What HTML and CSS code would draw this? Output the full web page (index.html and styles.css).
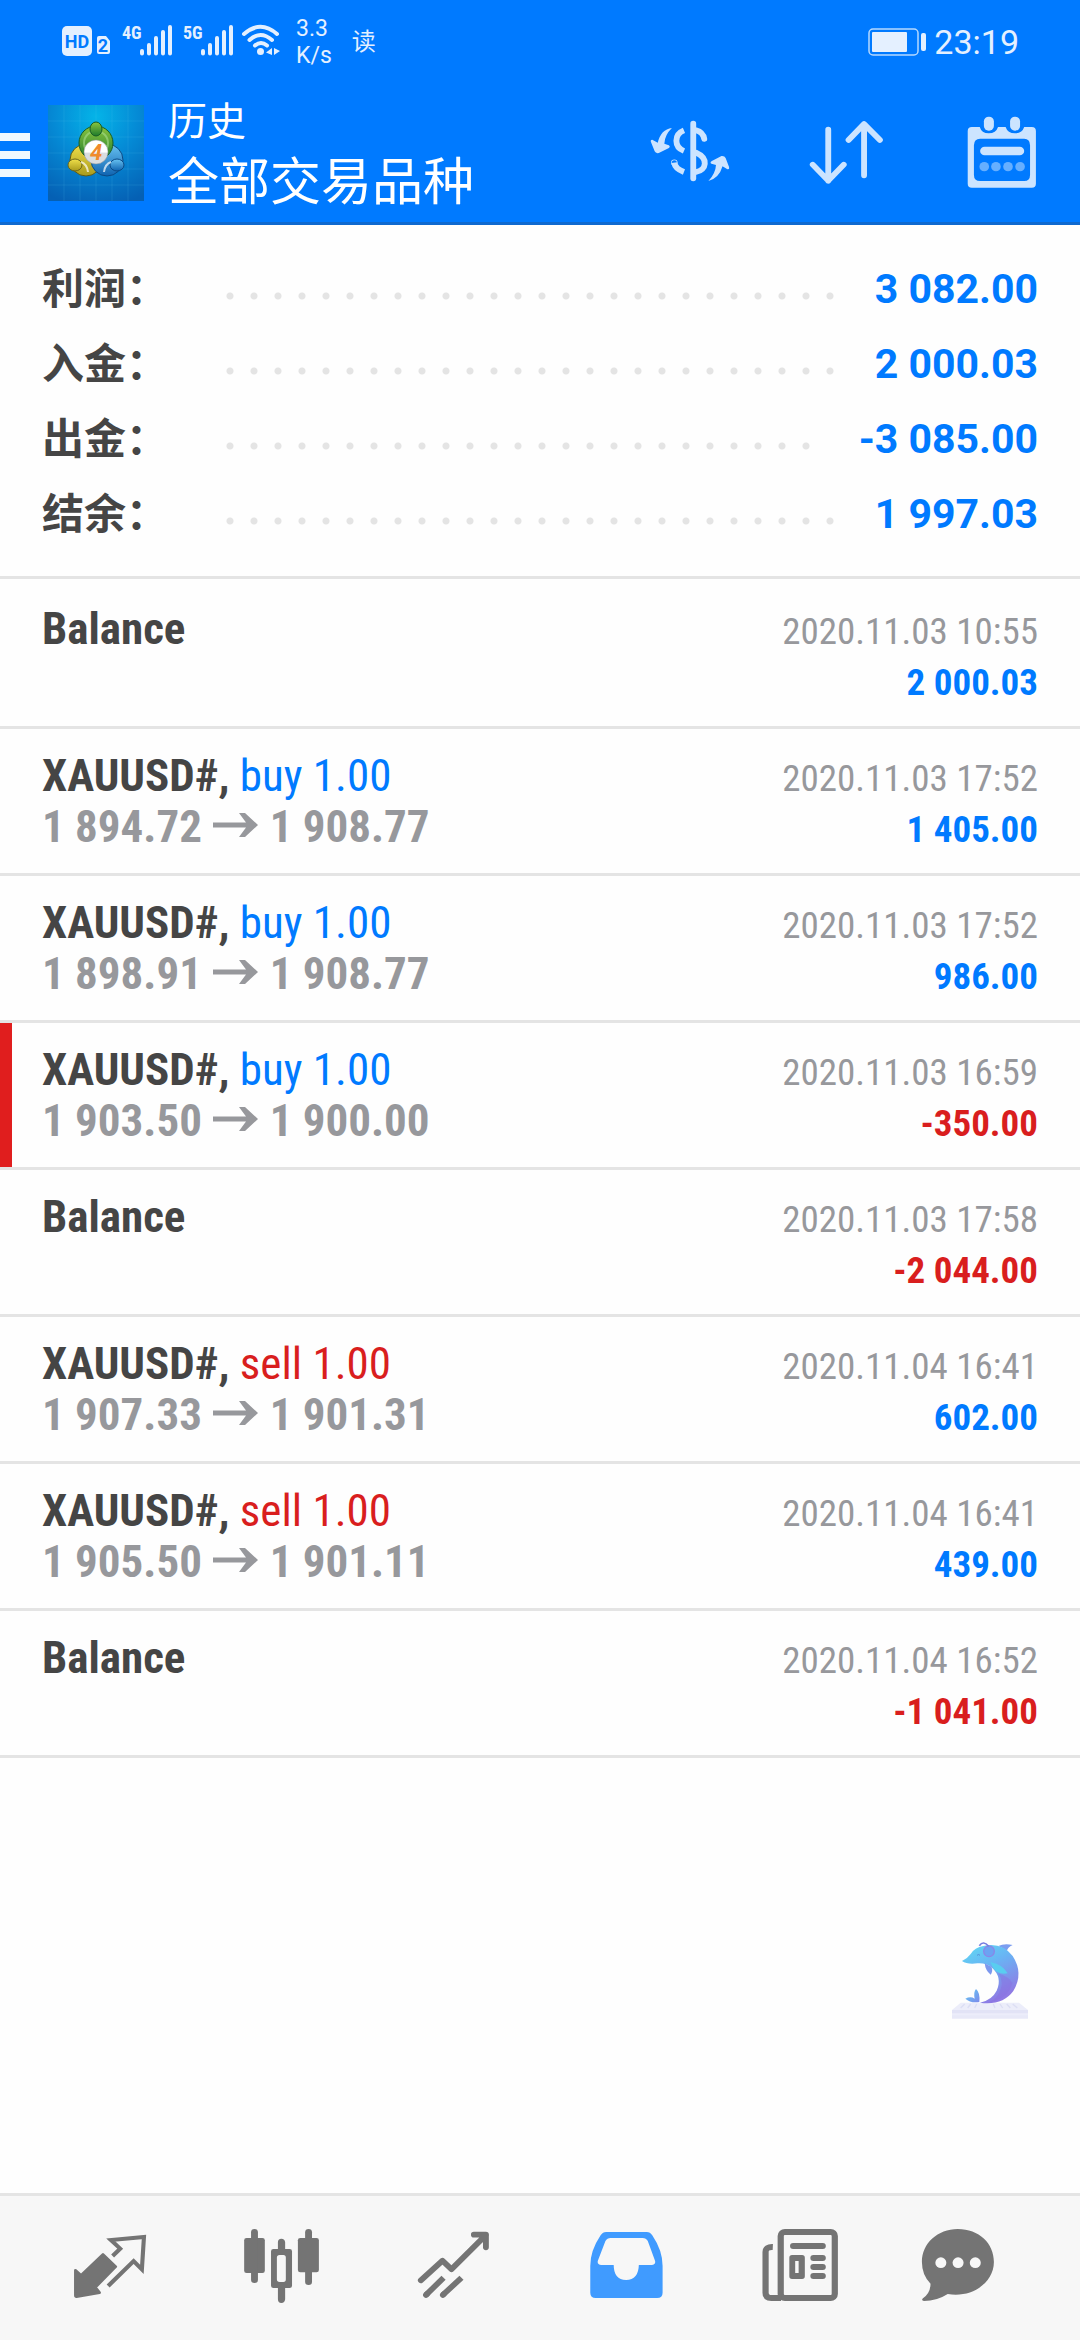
FILE: index.html
```html
<!DOCTYPE html>
<html lang="zh-CN">
<head>
<meta charset="utf-8">
<meta name="viewport" content="width=device-width, initial-scale=1">
<title>历史</title>
<link rel="stylesheet" href="styles.css">
</head>
<body>
<div class="app">
  <header class="header">
    <div class="status">
      <svg class="status-icons" viewBox="60 20 222 44" aria-hidden="true">
        <rect x="62" y="26" width="30" height="30" rx="5" fill="#e4f0ff"/>
        <text x="77" y="48" class="svg-hd">HD</text>
        <path d="M99 36h7l4 5v11q0 2-2 2h-9q-2 0-2-2V38q0-2 2-2z" fill="#e4f0ff"/>
        <text x="103" y="52" class="svg-sim">2</text>
        <text x="122" y="39" class="svg-net">4G</text>
        <path d="M142 51v2.500M149 45v8.500M156 38v15.500M163 32v21.500M170 27v26.500" class="bars"/>
        <text x="183" y="39" class="svg-net">5G</text>
        <path d="M203 51v2.500M210 45v8.500M217 38v15.500M224 32v21.500M231 27v26.500" class="bars"/>
        <path d="M244 34q16.500-14.500 33 0M249.500 40q11-10 22.500 0M255 45.500q6-5 12 0" class="wifi"/>
        <circle cx="260.500" cy="51.500" r="3.500" fill="#e4f0ff"/>
        <path d="M272 48v7l-6-2.500zM274 48l6 3-6 4z" fill="#e4f0ff"/>
      </svg>
      <div class="speed"><span>3.3</span><span>K/s</span></div>
      <span class="reader">读</span>
      <svg class="battery" viewBox="0 0 58 28" aria-hidden="true">
        <rect x="1" y="1" width="49" height="26" rx="4" fill="none" stroke="#b5d9ff" stroke-width="1.500"/>
        <rect x="4" y="4" width="35" height="20" rx="1" fill="#e4f0ff"/>
        <rect x="53" y="5" width="5" height="18" rx="2" fill="#e4f0ff"/>
      </svg>
      <time class="clock">23:19</time>
    </div>
    <div class="toolbar">
      <button class="menu" type="button" aria-label="菜单"><i></i><i></i><i></i></button>
      <svg class="logo" viewBox="0 0 96 96" aria-hidden="true">
        <defs>
          <radialGradient id="sky" cx=".5" cy=".12" r=".95"><stop offset="0" stop-color="#04b4e8"/><stop offset=".45" stop-color="#058bd6"/><stop offset="1" stop-color="#0560b4"/></radialGradient>
          <linearGradient id="grn" x2="0" y2="1"><stop offset="0" stop-color="#8cc63f"/><stop offset="1" stop-color="#1d7a2c"/></linearGradient>
          <linearGradient id="yel" x2="0" y2="1"><stop offset="0" stop-color="#f0e04a"/><stop offset="1" stop-color="#a99a1c"/></linearGradient>
          <linearGradient id="blu" x2="0" y2="1"><stop offset="0" stop-color="#69c3f2"/><stop offset="1" stop-color="#0f63b0"/></linearGradient>
          <linearGradient id="ball" x2="0" y2="1"><stop offset=".5" stop-color="#fff"/><stop offset=".55" stop-color="#dadde0"/></linearGradient>
        </defs>
        <rect width="96" height="96" fill="url(#sky)"/>
        <path d="M16 0v96M32 0v96M48 0v96M64 0v96M80 0v96M0 16h96M0 32h96M0 48h96M0 64h96M0 80h96" stroke="#5fd0f5" stroke-opacity=".15"/>
        <circle cx="38" cy="55" r="16" fill="url(#yel)" stroke="#5d5a16"/>
        <circle cx="59" cy="55" r="16" fill="url(#blu)" stroke="#0b4a86"/>
        <circle cx="48" cy="38" r="17" fill="url(#grn)" stroke="#175c24"/>
        <circle cx="48" cy="38" r="12" fill="none" stroke="#a8dc8c" stroke-opacity=".6" stroke-width="2"/>
        <ellipse cx="48" cy="24" rx="6" ry="7" fill="url(#grn)" stroke="#175c24"/>
        <ellipse cx="27" cy="60" rx="7" ry="6" fill="url(#yel)" stroke="#6b651a"/>
        <ellipse cx="69" cy="60" rx="7" ry="6" fill="url(#blu)" stroke="#0b4a86"/>
        <path d="M33 57q6 2 7 10M63 57q-6 2-7 10" stroke="#fff" stroke-opacity=".7" stroke-width="2" fill="none"/>
        <circle cx="48" cy="47" r="12" fill="url(#ball)" stroke="#8a9096" stroke-width=".5"/>
        <text x="48" y="55" class="svg-four">4</text>
      </svg>
      <div class="titles">
        <p class="title">历史</p>
        <h1 class="subtitle">全部交易品种</h1>
      </div>
      <div class="actions">
        <button type="button" aria-label="交易品种">
          <svg viewBox="0 0 84 74"><g transform="translate(-108 -116) scale(.34438 .33333)">
            <g fill="none" stroke="#cce4ff" stroke-linecap="round" stroke-linejoin="round" stroke-width="17">
              <path d="M445 371V535"/>
              <path d="M453 391Q474 397 477 417M453 458C490 475 484 510 453 516" />
              <path d="M418 391Q396 400 396 422T418 453M390 488Q392 506 418 516" stroke-linecap="butt"/>
              <circle cx="390" cy="488" r="1"/>
            </g>
            <path d="M383 384Q351 388 342 428L326 419Q319 419 323 428L333 454Q336 461 345 459L373 445Q380 440 374 436L361 431Q362 405 383 384zM489 543Q520 535 530 499L543 507Q551 510 549 501L539 474Q536 467 527 468L499 483Q492 488 498 491L511 495Q510 520 489 543z" fill="#cce4ff"/>
            <path d="M422 375h10v160h-10z" fill="#007aff"/>
          </g></svg>
        </button>
        <button type="button" aria-label="排序">
          <svg viewBox="0 0 84 74"><g transform="translate(-262 -116) scale(.34438 .33333)" fill="none" stroke="#cce4ff" stroke-width="17" stroke-linecap="round" stroke-linejoin="round">
            <path d="M837 389V542M792 494L837 542L882 494M941 526V372M896 420L941 372L987 420"/>
          </g></svg>
        </button>
        <button type="button" aria-label="日期">
          <svg viewBox="0 0 84 74"><g transform="translate(-416 -116) scale(.34438 .33333)">
            <path fill="#cce4ff" fill-rule="evenodd" d="M1254 381H1277Q1282 400 1303 400T1330 381H1352Q1358 400 1379 400T1406 381H1428Q1440 381 1440 393V551Q1440 563 1428 563H1254Q1242 563 1242 551V393Q1242 381 1254 381zM1278 416Q1260 416 1260 436V524Q1260 543 1278 543H1406Q1423 543 1423 524V436Q1423 416 1406 416z"/>
            <rect x="1285" y="346" width="37" height="50" rx="18" fill="#007aff"/>
            <rect x="1361" y="346" width="37" height="50" rx="18" fill="#007aff"/>
            <rect x="1289" y="350" width="29" height="42" rx="14" fill="#cce4ff"/>
            <rect x="1365" y="350" width="29" height="42" rx="14" fill="#cce4ff"/>
            <rect x="1278" y="440" width="128" height="26" rx="13" fill="#cce4ff"/>
            <g fill="#66afff"><circle cx="1290" cy="500" r="14"/><circle cx="1324" cy="500" r="14"/><circle cx="1359" cy="500" r="14"/><circle cx="1394" cy="500" r="14"/></g>
          </g></svg>
        </button>
      </div>
    </div>
  </header>

  <main class="main">
    <dl class="summary">
      <div class="sum-row"><dt>利润：</dt><dd>3 082.00</dd></div>
      <div class="sum-row"><dt>入金：</dt><dd>2 000.03</dd></div>
      <div class="sum-row"><dt>出金：</dt><dd>-3 085.00</dd></div>
      <div class="sum-row"><dt>结余：</dt><dd>1 997.03</dd></div>
    </dl>
    <svg class="defs" aria-hidden="true"><symbol id="arrow" viewBox="0 0 45 24"><path d="M0 9.500H33L26 0H32L45 12L32 24H26L33 14.500H0z" fill="currentColor"/></symbol></svg>
    <ul class="deals">
      <li class="deal">
        <div class="line"><b>Balance</b><time class="date">2020.11.03 10:55</time></div>
        <div class="line"><b class="amount">2 000.03</b></div>
      </li>
      <li class="deal">
        <div class="line"><span><b>XAUUSD#,</b> <span class="buy">buy 1.00</span></span><time class="date">2020.11.03 17:52</time></div>
        <div class="line"><b class="price">1 894.72 <svg class="arrow" role="img" aria-label="→"><use href="#arrow"/></svg> 1 908.77</b><b class="amount">1 405.00</b></div>
      </li>
      <li class="deal">
        <div class="line"><span><b>XAUUSD#,</b> <span class="buy">buy 1.00</span></span><time class="date">2020.11.03 17:52</time></div>
        <div class="line"><b class="price">1 898.91 <svg class="arrow" role="img" aria-label="→"><use href="#arrow"/></svg> 1 908.77</b><b class="amount">986.00</b></div>
      </li>
      <li class="deal stopped">
        <div class="line"><span><b>XAUUSD#,</b> <span class="buy">buy 1.00</span></span><time class="date">2020.11.03 16:59</time></div>
        <div class="line"><b class="price">1 903.50 <svg class="arrow" role="img" aria-label="→"><use href="#arrow"/></svg> 1 900.00</b><b class="amount loss">-350.00</b></div>
      </li>
      <li class="deal">
        <div class="line"><b>Balance</b><time class="date">2020.11.03 17:58</time></div>
        <div class="line"><b class="amount loss">-2 044.00</b></div>
      </li>
      <li class="deal">
        <div class="line"><span><b>XAUUSD#,</b> <span class="sell">sell 1.00</span></span><time class="date">2020.11.04 16:41</time></div>
        <div class="line"><b class="price">1 907.33 <svg class="arrow" role="img" aria-label="→"><use href="#arrow"/></svg> 1 901.31</b><b class="amount">602.00</b></div>
      </li>
      <li class="deal">
        <div class="line"><span><b>XAUUSD#,</b> <span class="sell">sell 1.00</span></span><time class="date">2020.11.04 16:41</time></div>
        <div class="line"><b class="price">1 905.50 <svg class="arrow" role="img" aria-label="→"><use href="#arrow"/></svg> 1 901.11</b><b class="amount">439.00</b></div>
      </li>
      <li class="deal">
        <div class="line"><b>Balance</b><time class="date">2020.11.04 16:52</time></div>
        <div class="line"><b class="amount loss">-1 041.00</b></div>
      </li>
    </ul>
  </main>

  <button class="floating" type="button" aria-label="朗读">
    <svg viewBox="66 60 228 240">
      <defs>
        <linearGradient id="body" x1="0" y1="0" x2=".5" y2="1"><stop offset="0" stop-color="#5fdcf2"/><stop offset=".45" stop-color="#69b4f4"/><stop offset="1" stop-color="#8f7ae4"/></linearGradient>
        <linearGradient id="fin" x2="1" y2="1"><stop offset="0" stop-color="#62cdf2"/><stop offset="1" stop-color="#7d8aec"/></linearGradient>
      </defs>
      <path d="M92 248H267L294 270V294H66V270z" fill="#ecedfa"/>
      <path d="M66 270H294V280H66z" fill="#e2e3f6"/>
      <path d="M66 286H294V296H66z" fill="#e8e9f8"/>
      <path d="M104 252l-12 12M122 252l-9 12M140 252l-6 12M190 252l5 12M210 252l8 12M230 252l11 12M248 252l14 12" stroke="#dcdef4" stroke-width="4"/>
      <path d="M205 78Q222 70 248 75Q232 83 231 92z" fill="#7b9df0"/>
      <path d="M96 123Q112 116 122 102Q134 82 160 78Q215 66 248 108Q282 160 250 213Q218 257 150 248Q186 240 200 212Q218 172 186 143Q168 128 142 130Q112 134 96 123z" fill="url(#body)"/>
      <path d="M205 160Q226 190 204 225Q192 242 172 249Q234 238 247 190Q240 172 205 160z" fill="#8a6fe0" opacity=".45"/>
      <path d="M181 126Q216 132 233 160Q203 165 190 145z" fill="#59cdf0"/>
      <path d="M164 130Q166 152 182 164Q190 152 184 140z" fill="#7c98ee"/>
      <path d="M106 236Q122 228 134 236Q130 216 138 207Q151 218 148 246Q122 250 106 236z" fill="url(#fin)"/>
      <circle cx="177" cy="94" r="16" fill="#6ba3f2" stroke="#8a86e8" stroke-width="4"/>
      <path d="M148 77Q160 60 176 79" fill="none" stroke="#777ee0" stroke-width="5"/>
      <path d="M141 106q5-5 9 0" fill="none" stroke="#5690d8" stroke-width="3"/>
    </svg>
  </button>

  <nav class="tabs">
    <a href="#quotes" aria-label="行情"><svg viewBox="0 0 100 80"><g transform="translate(-60 -48) scale(.34438 .33333)">
      <path fill="#747474" stroke="#747474" stroke-width="8" stroke-linejoin="round" d="M219 271L235 286L299 223L336 260L277 322L289 338L222 350Q219 350 219 346z"/>
      <path fill="none" stroke="#747474" stroke-width="12" stroke-linejoin="miter" d="M327 228L349 206L322 180L418 171L412 268L388 243L314 318"/>
    </g></svg></a>
    <a href="#chart" aria-label="图表"><svg viewBox="0 0 100 80"><g transform="translate(-232 -48) scale(.34438 .33333)" fill="#747474">
      <rect x="709" y="174" width="60" height="105" rx="7"/><rect x="729" y="147" width="20" height="162" rx="10"/>
      <rect x="865" y="174" width="61" height="103" rx="7"/><rect x="886" y="147" width="20" height="168" rx="10"/>
      <path d="M807 210V187Q807 176 817 176T828 187V210zM807 320V358Q807 369 817 369T828 358V320z"/>
      <path fill-rule="evenodd" d="M794 207H841Q848 207 848 214V317Q848 324 841 324H794Q787 324 787 317V214Q787 207 794 207zM812 225Q804 225 804 233V298Q804 306 812 306H823Q830 306 830 298V233Q830 225 823 225z"/>
    </g></svg></a>
    <a href="#trade" aria-label="交易"><svg viewBox="0 0 100 80"><g transform="translate(-404 -48) scale(.34438 .33333)" fill="none" stroke="#747474" stroke-width="17" stroke-linejoin="round">
      <path stroke-linecap="round" d="M1222 301L1285 242L1311 268L1411 165M1376 164H1411V202"/>
      <path d="M1236 346L1288 293M1285 346L1340 293"/>
      <path stroke-linecap="round" d="M1237 345L1240 342M1286 345L1289 342"/>
    </g></svg></a>
    <a href="#history" aria-label="历史" aria-current="page"><svg viewBox="0 0 100 80"><g transform="translate(-36 -48) scale(.34438 .33333)">
      <path fill="#409bff" fill-rule="evenodd" d="M192 156H310Q320 156 326 166Q356 212 356 258V338Q356 354 340 354H162Q146 354 146 338V258Q146 212 176 166Q182 156 192 156zM205 174Q195 174 190 183L168 242Q165 254 178 255H214Q214 299 250 300Q286 299 287 255H324Q337 254 334 242L313 183Q308 174 298 174z"/>
    </g></svg></a>
    <a href="#news" aria-label="新闻"><svg viewBox="0 0 100 80"><g transform="translate(-208 -48) scale(.34438 .33333)">
      <g fill="none" stroke="#747474" stroke-width="18">
        <rect x="699" y="156" width="157" height="198" rx="12"/>
        <path d="M676 201Q655 200 655 216V338Q655 354 672 354H700"/>
        <path stroke-linecap="round" d="M735 198H821M794 234H821M794 261H821M794 288H821"/>
      </g>
      <path fill="#747474" fill-rule="evenodd" d="M732 225H761Q769 225 769 233V289Q769 297 761 297H732Q724 297 724 289V233Q724 225 732 225zM741 243V279H751V243z"/>
    </g></svg></a>
    <a href="#chat" aria-label="聊天"><svg viewBox="0 0 100 80"><g transform="translate(-380 -48) scale(.34438 .33333)">
      <path fill="#747474" d="M1213 147C1275 147 1318 190 1318 246C1318 307 1255 355 1184 342Q1152 363 1115 363Q1106 361 1112 355Q1134 339 1134 311Q1109 285 1109 246C1109 190 1155 147 1213 147z"/>
      <g fill="#f7f7f7"><circle cx="1164" cy="248" r="16"/><circle cx="1214" cy="248" r="16"/><circle cx="1264" cy="248" r="16"/></g>
    </g></svg></a>
  </nav>
</div>
</body>
</html>
```
FILE: styles.css
```css
* {
  box-sizing: border-box;
}

body,
p,
h1,
dl,
dd,
ul {
  margin: 0;
  padding: 0;
}

body {
  background: #fefefe;
  color: #454545;
  font-family: Roboto, "Noto Sans CJK SC", sans-serif;
}

button {
  margin: 0;
  padding: 0;
  border: 0;
  background: none;
}

svg {
  display: block;
}

.app {
  display: flex;
  flex-direction: column;
  min-height: 100vh;
}

/* Header */
.header {
  background: #007aff;
  border-bottom: 3px solid #0f69cf;
  color: #fff;
}

.status {
  display: flex;
  align-items: center;
  height: 84px;
  padding: 0 61px 0 60px;
  color: #e4f0ff;
}

.status-icons {
  width: 222px;
  height: 44px;
}

.svg-hd,
.svg-sim {
  fill: #007aff;
  font-family: Roboto, sans-serif;
  font-size: 18px;
  font-weight: 700;
  text-anchor: middle;
}

.svg-net {
  fill: #e4f0ff;
  font-family: "Roboto Condensed", Roboto, sans-serif;
  font-size: 18px;
  font-weight: 700;
}

.svg-four {
  fill: #f08a2c;
  font-family: Roboto, sans-serif;
  font-size: 22px;
  font-style: italic;
  font-weight: 700;
  text-anchor: middle;
}

.bars,
.wifi {
  fill: none;
  stroke: #e4f0ff;
  stroke-linecap: round;
  stroke-width: 4px;
}

.speed {
  display: flex;
  flex-direction: column;
  margin-left: 14px;
  font-size: 23px;
  line-height: 27px;
}

.reader {
  margin-left: 20px;
  font-size: 24px;
  line-height: 32px;
}

.battery {
  width: 58px;
  height: 28px;
  margin-left: auto;
}

.clock {
  margin-left: 8px;
  font-size: 34px;
  line-height: 40px;
}

.toolbar {
  display: flex;
  align-items: center;
  height: 138px;
  padding-right: 40px;
}

.menu {
  display: flex;
  flex-direction: column;
  gap: 10px;
  width: 30px;
  padding-top: 4px;
}

.menu i {
  height: 8px;
  background: #f0f8ff;
}

.logo {
  width: 96px;
  height: 96px;
  margin-left: 18px;
}

.titles {
  flex: 1;
  padding: 8px 0 0 24px;
  white-space: nowrap;
}

.title {
  font-size: 39px;
  line-height: 52px;
}

.subtitle {
  font-size: 51px;
  font-weight: 400;
  line-height: 70px;
}

.actions {
  display: flex;
  gap: 70px;
}

.actions svg {
  width: 84px;
  height: 74px;
}

/* Account totals */
.main {
  flex: 1;
}

.summary {
  padding: 27px 42px 24px;
  border-bottom: 3px solid #e4e4e4;
}

.sum-row {
  display: flex;
  align-items: center;
  height: 75px;
  font-size: 42px;
  font-weight: 700;
  line-height: 51px;
}

.sum-row dt {
  width: 176px;
}

.sum-row dd {
  display: flex;
  flex: 1;
  align-items: center;
  color: #007aff;
  font-size: 41px;
  white-space: nowrap;
}

.sum-row dd::before {
  content: "";
  flex: 1;
  height: 8px;
  margin: 12px 36px 0 0;
  background: radial-gradient(circle at center, #e4e4e4 3px, transparent 4px) 0 0 / 24px 8px repeat-x;
}

/* Deal list */
.defs {
  display: none;
}

.deals {
  padding-top: 3px;
  list-style: none;
  font-family: "Roboto Condensed", Roboto, "Noto Sans CJK SC", sans-serif;
}

.deal {
  padding: 21px 42px;
  border-bottom: 3px solid #e4e4e4;
}

.stopped {
  background: linear-gradient(#e01e1e, #e01e1e) 0 0 / 12px 100% no-repeat;
}

/* The zero-width strut keeps one baseline for both text sizes */
.line {
  display: flex;
  align-items: baseline;
  height: 51px;
  font-size: 45px;
  line-height: 51px;
  white-space: nowrap;
}

.line::before {
  content: "\200b";
  width: 0;
}

.price,
.date {
  color: #97989c;
}

.date,
.amount {
  margin-left: auto;
  font-size: 37px;
}

.amount,
.buy {
  color: #007aff;
}

.sell,
.loss {
  color: #d91e1e;
}

.arrow {
  display: inline-block;
  width: 45px;
  height: 24px;
  margin: 0 1px;
  vertical-align: 5px;
}

/* Floating shortcut over the page */
.floating {
  position: fixed;
  right: 52px;
  bottom: 320px;
}

.floating svg {
  width: 76px;
  height: 80px;
}

/* Bottom tabs */
.tabs {
  display: flex;
  padding: 32px 24px;
  border-top: 3px solid #e4e4e4;
  background: #f7f7f7;
}

.tabs a {
  display: flex;
  flex: 1;
  justify-content: center;
}

.tabs svg {
  width: 100px;
  height: 80px;
}
```
